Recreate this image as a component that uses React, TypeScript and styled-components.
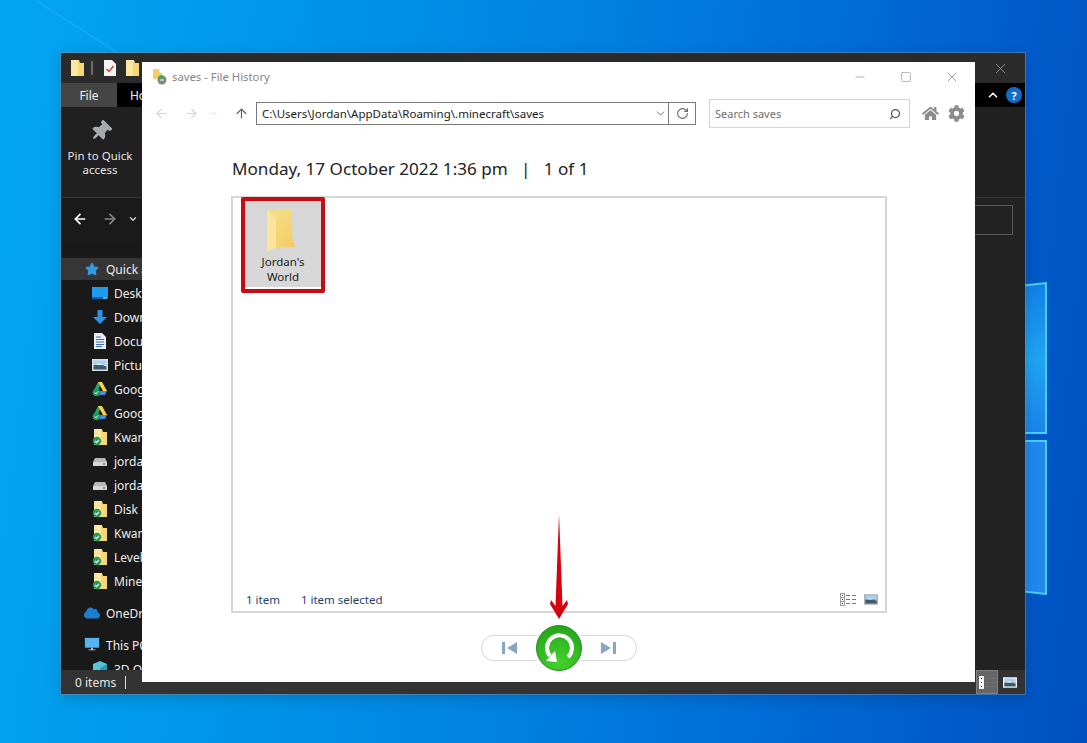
import React from 'react';
import styled, { createGlobalStyle } from 'styled-components';
import { ArrowLeft, ArrowRight, ArrowUp, ChevronDown, ChevronUp, Minus, RotateCw, Search, Square, X } from 'lucide-react';
import { FaCloud, FaCog, FaHome, FaStar, FaThumbtack } from 'react-icons/fa';

const GlobalStyle = createGlobalStyle`
	html, body {
		margin: 0;
		padding: 0;
		background: #0070da;
	}
	* {
		box-sizing: border-box;
	}
`;

// Desktop
const Desktop = styled.div`
	position: relative;
	width: 1087px;
	height: 743px;
	overflow: hidden;
	font-family: 'Noto Sans', 'Open Sans', sans-serif;
	background: linear-gradient(97deg, #02a6f2 0%, #0096ea 25%, #0082e2 50%, #006cd8 72%, #0050c0 100%);
`;

const Backdrop = styled.svg`
	position: absolute;
	inset: 0;
`;

// Explorer window (dark, behind)
const ExplorerWindow = styled.div`
	position: absolute;
	left: 61px;
	top: 53px;
	width: 964px;
	height: 641px;
	display: flex;
	flex-direction: column;
	background: #202020;
	box-shadow: 0 0 0 1px rgba(120, 140, 160, 0.55), 0 4px 14px rgba(0, 0, 0, 0.18);
	color: #f0f0f0;
	font-size: 12px;
`;

const ExplorerTitle = styled.div`
	height: 30px;
	flex: none;
	display: flex;
	align-items: center;
	padding: 0 16px 0 8px;
	gap: 6px;
	background: #2b2b2b;
`;

const TitleSeparator = styled.span`
	width: 2px;
	height: 14px;
	margin-right: 5px;
	background: #6a6a6a;
`;

const TitleIcon = styled.span`
	display: flex;
	margin-right: 2px;
`;

const ExplorerClose = styled.span`
	margin-left: auto;
	display: flex;
	color: #8f8f8f;
`;

const TabBar = styled.div`
	height: 24px;
	flex: none;
	display: flex;
	align-items: center;
	padding-right: 3px;
	background: #000;
`;

const Tab = styled.span<{ $active?: boolean }>`
	width: 56px;
	height: 100%;
	display: flex;
	align-items: center;
	justify-content: center;
	margin-right: ${(p) => (p.$active ? '2px' : '0')};
	background: ${(p) => (p.$active ? '#454545' : 'transparent')};
`;

const TabRight = styled.div`
	margin-left: auto;
	display: flex;
	align-items: center;
	gap: 6px;
`;

const HelpBadge = styled.span`
	width: 16px;
	height: 16px;
	border-radius: 50%;
	display: flex;
	align-items: center;
	justify-content: center;
	background: #0f6cc8;
	color: #fff;
	font-size: 11px;
	font-weight: 700;
`;

const Ribbon = styled.div`
	height: 91px;
	flex: none;
	padding-top: 14px;
	background: #202020;
	border-bottom: 1px solid #363636;
`;

const RibbonAction = styled.div`
	width: 78px;
	display: flex;
	flex-direction: column;
	align-items: center;
	text-align: center;
	line-height: 13.5px;
	font-size: 11.5px;
	color: #e4e4e4;
`;

const PinIcon = styled(FaThumbtack)`
	transform: rotate(45deg);
	color: #a4aab0;
	margin-bottom: 7px;
`;

const ExplorerNav = styled.div`
	height: 46px;
	flex: none;
	display: flex;
	align-items: center;
	padding: 0 12px 4px 11px;
	gap: 14px;
	background: linear-gradient(90deg, #1a1a1a 200px, #222 200px);
`;

const NavCaret = styled(ChevronDown)`
	margin-left: -4px;
	color: #ccc;
`;

const ExplorerSearch = styled.div`
	width: 200px;
	height: 30px;
	margin-left: auto;
	margin-top: 2px;
	border: 1px solid #5a5a5a;
`;

const ExplorerBody = styled.div`
	flex: 1;
	min-height: 0;
	display: flex;
	overflow: hidden;
	background: #222;
`;

const Sidebar = styled.div`
	width: 200px;
	flex: none;
	padding-top: 13px;
	background: #191919;
`;

const SideRow = styled.div<{ $level: number; $active?: boolean; $gap?: boolean }>`
	height: 24px;
	display: flex;
	align-items: center;
	gap: 6px;
	white-space: nowrap;
	margin-top: ${(p) => (p.$gap ? '8px' : '0')};
	padding-left: ${(p) => (p.$level === 2 ? '31px' : '23px')};
	font-size: 12px;
	color: #ececec;
	background: ${(p) => (p.$active ? 'linear-gradient(#363636, #363636) 0 1px / 100% 22px no-repeat' : 'none')};
`;

const SideIcon = styled.span`
	width: 16px;
	height: 16px;
	flex: none;
	display: flex;
	align-items: center;
	justify-content: center;
`;

const ExplorerStatus = styled.div`
	height: 24px;
	flex: none;
	display: flex;
	align-items: center;
	padding-left: 14px;
	background: #333;
	color: #e6e6e6;
	font-size: 12px;
`;

const StatusBar = styled.span`
	width: 1px;
	height: 13px;
	margin-left: 9px;
	background: #ddd;
`;

const ViewButtons = styled.div`
	margin-left: auto;
	height: 100%;
	display: flex;
	align-items: center;
`;

const ViewButton = styled.span<{ $active?: boolean }>`
	width: 22px;
	height: 100%;
	margin-right: ${(p) => (p.$active ? '1px' : '4px')};
	display: flex;
	align-items: center;
	justify-content: center;
	background: ${(p) => (p.$active ? '#666' : 'transparent')};
	box-shadow: ${(p) => (p.$active ? 'inset 0 0 0 1px #808080' : 'none')};
`;

// File History window (white, on top)
const HistoryWindow = styled.div`
	position: absolute;
	left: 142px;
	top: 62px;
	width: 833px;
	height: 620px;
	display: flex;
	flex-direction: column;
	background: #fff;
`;

const HistoryTitle = styled.div`
	height: 29px;
	flex: none;
	display: flex;
	align-items: center;
	padding-left: 10px;
	gap: 5px;
	font-size: 11.3px;
	color: #858585;
`;

const WindowControls = styled.div`
	margin-left: auto;
	display: flex;
	align-items: center;
	height: 100%;
	color: #777;
`;

const WindowControl = styled.span`
	width: 46px;
	display: flex;
	justify-content: center;
`;

const HistoryNav = styled.div`
	height: 29px;
	margin-top: 8px;
	flex: none;
	display: flex;
	align-items: center;
	padding-left: 8px;
`;

const NavSlot = styled.span<{ $w: number; $color: string; $ml?: number }>`
	width: ${(p) => p.$w}px;
	margin-left: ${(p) => p.$ml ?? 0}px;
	display: flex;
	justify-content: center;
	color: ${(p) => p.$color};
`;

const AddressBox = styled.div`
	width: 440px;
	height: 23px;
	margin-left: 7px;
	display: flex;
	align-items: center;
	border: 1px solid #7a7a7a;
	font-size: 11.5px;
	color: #1a1a1a;
`;

const AddressText = styled.span`
	flex: 1;
	padding-left: 5px;
	white-space: nowrap;
`;

const AddressChevron = styled.span`
	width: 16px;
	display: flex;
	justify-content: center;
	color: #555;
`;

const RefreshCell = styled.span`
	width: 27px;
	height: 100%;
	display: flex;
	align-items: center;
	justify-content: center;
	border-left: 1px solid #7a7a7a;
	color: #666;
`;

const SearchBox = styled.div`
	width: 201px;
	height: 29px;
	margin-left: 13px;
	display: flex;
	align-items: center;
	justify-content: space-between;
	padding: 0 8px 0 5px;
	border: 1px solid #d4d4d4;
	font-size: 11px;
	color: #6e6e6e;
`;

const FlippedSearch = styled(Search)`
	transform: scaleX(-1);
	color: #555;
`;

const NavTools = styled.div`
	display: flex;
	align-items: center;
	gap: 9px;
	margin-left: 12px;
	color: #8c8c8c;
`;

const DateHeading = styled.h1`
	margin: 28px 0 0 90px;
	height: 26px;
	line-height: 26px;
	font-size: 17.1px;
	font-weight: 400;
	color: #222;
	white-space: pre;
`;

const Panel = styled.div`
	width: 656px;
	height: 417px;
	margin: 14px 0 0 89px;
	display: flex;
	flex-direction: column;
	border: 2px solid #d6d6d6;
`;

const PanelContent = styled.div`
	flex: 1;
	padding-left: 8px;
`;

const SelectedItem = styled.div`
	width: 84px;
	height: 96px;
	margin-top: -1px;
	display: flex;
	flex-direction: column;
	align-items: center;
	padding-top: 9px;
	border: 4px solid #c80b12;
	border-radius: 2px;
	background: linear-gradient(#d7d7d7, #d7d7d7) 0 0 / 100% 86px no-repeat, #fff;
`;

const BigFolder = styled.svg`
	flex: none;
	margin-right: 4px;
`;

const ItemLabel = styled.span`
	margin-top: 2px;
	width: 70px;
	text-align: center;
	font-size: 11.5px;
	line-height: 15px;
	color: #1a1a1a;
`;

const PanelStatus = styled.div`
	height: 24px;
	flex: none;
	display: flex;
	align-items: center;
	padding: 0 7px 0 13px;
	font-size: 11.5px;
	color: #23406e;
`;

const StatusText = styled.span`
	margin-right: 21px;
`;

const PanelViews = styled.div`
	margin-left: auto;
	display: flex;
	align-items: center;
	gap: 7px;
`;

const Controls = styled.div`
	margin-top: 12px;
	display: flex;
	align-items: center;
	justify-content: center;
	padding-left: 1px;
`;

const Pill = styled.div<{ $side: 'left' | 'right' }>`
	width: 56px;
	height: 26px;
	display: flex;
	align-items: center;
	justify-content: center;
	border: 1px solid #d6dbe2;
	background: #fff;
	border-radius: ${(p) => (p.$side === 'left' ? '13px 0 0 13px' : '0 13px 13px 0')};
	border-${(p) => (p.$side === 'left' ? 'right' : 'left')}: none;
	margin-${(p) => (p.$side === 'left' ? 'right' : 'left')}: -1px;
`;

const RestoreButton = styled.div`
	width: 46px;
	height: 46px;
	flex: none;
	position: relative;
	z-index: 1;
	border-radius: 50%;
	border: 1px solid #1c8a1c;
	box-shadow: 0 0 0 2px #fff;
	background: radial-gradient(circle at 50% 85%, #46d02e 0%, #30b820 55%, #229a1a 100%);
	display: flex;
`;

const RedArrow = styled.svg`
	position: absolute;
	left: 548px;
	top: 514px;
`;

// small drawings
const FolderGlyph = ({ check }: { check?: boolean }) => (
	<svg width="16" height="18" viewBox="0 0 16 18">
		<path d="M2 1h8l1 3h4v13H2z" fill="#f7d774" />
		<path d="M2 1h7v16H2z" fill="#fbe7a0" />
		{check && (
			<>
				<circle cx="5" cy="13" r="4.2" fill="#1f9a58" />
				<path d="M3 13l1.5 1.6L7 11.8" stroke="#fff" strokeWidth="1.1" fill="none" />
			</>
		)}
	</svg>
);

const DriveGlyph = () => (
	<svg width="16" height="16" viewBox="0 0 16 16">
		<path d="M3 5h10l2 4H1z" fill="#b8b8b8" />
		<rect x="1" y="9" width="14" height="4" rx="0.5" fill="#d8d8d8" />
		<rect x="11" y="10.5" width="2" height="1" fill="#444" />
	</svg>
);

const GoogleGlyph = () => (
	<svg width="16" height="16" viewBox="0 0 16 16">
		<path d="M6 1h4l-4 8H2z" fill="#1fa463" />
		<path d="M6 1h4l5 9h-4z" fill="#ffd04b" />
		<path d="M6 10h9l-2 4H4z" fill="#4687f4" />
		<circle cx="4.5" cy="11.5" r="3.8" fill="#1f9a58" />
		<path d="M2.7 11.5l1.3 1.4 2.2-2.5" stroke="#fff" strokeWidth="1" fill="none" />
	</svg>
);

const DesktopGlyph = () => (
	<svg width="16" height="14" viewBox="0 0 16 14">
		<rect x="0" y="1" width="16" height="12" fill="#1b9cf0" />
		<rect x="0" y="11" width="16" height="2" fill="#0d5fa8" />
		<rect x="11" y="11.5" width="4" height="1" fill="#cfe8fa" />
	</svg>
);

const DownloadGlyph = () => (
	<svg width="16" height="16" viewBox="0 0 16 16">
		<path d="M5.5 1h5v7H15l-7 7-7-7h4.5z" fill="#2f8fe0" />
	</svg>
);

const DocumentGlyph = () => (
	<svg width="12" height="16" viewBox="0 0 12 16">
		<path d="M0 0h8l4 4v12H0z" fill="#e8eef4" />
		<path d="M2 4h5M2 6.5h8M2 9h8M2 11.5h8M2 13.5h6" stroke="#3a6ea8" strokeWidth="1" />
	</svg>
);

const PictureGlyph = ({ w = 16, h = 12, frame = '#d8dde2' }: { w?: number; h?: number; frame?: string }) => (
	<svg width={w} height={h} viewBox="0 0 16 12">
		<rect width="16" height="12" fill={frame} />
		<rect x="1.5" y="1.5" width="13" height="4.5" fill="#a8d0f2" />
		<rect x="1.5" y="6" width="13" height="4.5" fill="#3e5a68" />
		<path d="M1.5 6.5L7 4.5l7.5 3V6H1.5z" fill="#e8f2fa" />
	</svg>
);

const MonitorGlyph = () => (
	<svg width="18" height="16" viewBox="0 0 18 16">
		<rect x="1" y="0" width="16" height="11" fill="#58b4f0" />
		<path d="M8 11h2v2h3v1H5v-1h3z" fill="#c8d4de" />
	</svg>
);

const CubeGlyph = () => (
	<svg width="16" height="16" viewBox="0 0 16 16">
		<path d="M8 0l7 3v9l-7 4-7-4V3z" fill="#58c4d8" />
		<path d="M8 7l7-4v9l-7 4z" fill="#2f98b8" />
	</svg>
);

const ListViewGlyph = ({ box, line }: { box: string; line: string }) => (
	<svg width="17" height="13" viewBox="0 0 17 13">
		<rect x="0.5" y="0.5" width="4" height="12" fill="#fff" stroke={box} />
		<path d="M0 4.5h5M0 8.5h5" stroke={box} />
		<rect x="2" y="2" width="1" height="1" fill="#333" />
		<rect x="2" y="6" width="1" height="1" fill="#333" />
		<rect x="2" y="10" width="1" height="1" fill="#333" />
		<path d="M6 2.5h4M12 2.5h4M6 6.5h4M12 6.5h4M6 10.5h4M12 10.5h4" stroke={line} />
	</svg>
);

const ChecklistGlyph = () => (
	<svg width="12" height="16" viewBox="0 0 12 16">
		<path d="M0 0h8l4 4v12H0z" fill="#f4f4f4" />
		<path d="M2.5 9l2.5 2.5L9.5 6" stroke="#d8402a" strokeWidth="1.5" fill="none" />
	</svg>
);

const HistoryGlyph = () => (
	<svg width="15" height="16" viewBox="0 0 15 16">
		<path d="M1 0h6l1 4h2v6H1z" fill="#f2cf6a" />
		<circle cx="10" cy="11" r="4.5" fill="#7a8a80" />
		<path d="M8 11h4" stroke="#fff" />
		<path d="M6.5 8.5a4 4 0 0 1 5-1" stroke="#35b040" strokeWidth="1.5" fill="none" />
	</svg>
);

const SkipGlyph = ({ flip }: { flip?: boolean }) => (
	<svg width="15" height="12" viewBox="0 0 15 12" style={flip ? { transform: 'scaleX(-1)' } : undefined}>
		<rect x="0" y="0" width="3" height="12" fill="#8aa4c4" />
		<path d="M15 0v12L5 6z" fill="#8aa4c4" />
	</svg>
);

const sideItems: { label: string; icon: React.ReactNode; level: number; active?: boolean; gap?: boolean }[] = [
	{ label: 'Quick access', icon: <FaStar size={14} color="#2f9be8" />, level: 1, active: true },
	{ label: 'Desktop', icon: <DesktopGlyph />, level: 2 },
	{ label: 'Downloads', icon: <DownloadGlyph />, level: 2 },
	{ label: 'Documents', icon: <DocumentGlyph />, level: 2 },
	{ label: 'Pictures', icon: <PictureGlyph />, level: 2 },
	{ label: 'Google Drive', icon: <GoogleGlyph />, level: 2 },
	{ label: 'Google Drive', icon: <GoogleGlyph />, level: 2 },
	{ label: 'Kwan', icon: <FolderGlyph check />, level: 2 },
	{ label: 'jordan', icon: <DriveGlyph />, level: 2 },
	{ label: 'jordan', icon: <DriveGlyph />, level: 2 },
	{ label: 'Disk Drill', icon: <FolderGlyph check />, level: 2 },
	{ label: 'Kwan', icon: <FolderGlyph check />, level: 2 },
	{ label: 'Level', icon: <FolderGlyph check />, level: 2 },
	{ label: 'Minecraft', icon: <FolderGlyph check />, level: 2 },
	{ label: 'OneDrive', icon: <FaCloud size={16} color="#1c7fd4" />, level: 1, gap: true },
	{ label: 'This PC', icon: <MonitorGlyph />, level: 1, gap: true },
	{ label: '3D Objects', icon: <CubeGlyph />, level: 2 },
];

const App = () => {
	return (
		<Desktop>
			<GlobalStyle />
			<Backdrop width="1087" height="743" viewBox="0 0 1087 743">
				<defs>
					<linearGradient id="pane" x1="0" y1="0" x2="0" y2="1">
						<stop offset="0" stopColor="#1280e8" />
						<stop offset="0.5" stopColor="#20a4f4" />
						<stop offset="1" stopColor="#1a84ea" />
					</linearGradient>
				</defs>
				<path d="M35 0L118 53" stroke="#5cc8f8" strokeWidth="2" opacity="0.2" />
				<polygon points="1000,288 1046,283 1046,433 1000,433" fill="url(#pane)" stroke="#48d0f0" strokeWidth="2" />
				<polygon points="1000,441 1046,441 1046,594 1000,589" fill="#2288ee" stroke="#48d0f0" strokeWidth="2" />
			</Backdrop>

			<ExplorerWindow>
				<ExplorerTitle>
					<FolderGlyph />
					<TitleSeparator />
					<TitleIcon>
						<ChecklistGlyph />
					</TitleIcon>
					<FolderGlyph />
					<ExplorerClose>
						<X size={17} strokeWidth={1.25} />
					</ExplorerClose>
				</ExplorerTitle>
				<TabBar>
					<Tab $active>File</Tab>
					<Tab>Home</Tab>
					<TabRight>
						<ChevronUp size={14} strokeWidth={3} />
						<HelpBadge>?</HelpBadge>
					</TabRight>
				</TabBar>
				<Ribbon>
					<RibbonAction>
						<PinIcon size={21} />
						<span>Pin to Quick access</span>
					</RibbonAction>
				</Ribbon>
				<ExplorerNav>
					<ArrowLeft size={16} strokeWidth={2.5} color="#fff" />
					<ArrowRight size={16} strokeWidth={2.5} color="#888" />
					<NavCaret size={10} strokeWidth={3.5} />
					<ExplorerSearch />
				</ExplorerNav>
				<ExplorerBody>
					<Sidebar>
						{sideItems.map((item, i) => (
							<SideRow key={i} $level={item.level} $active={item.active} $gap={item.gap}>
								<SideIcon>{item.icon}</SideIcon>
								{item.label}
							</SideRow>
						))}
					</Sidebar>
				</ExplorerBody>
				<ExplorerStatus>
					0 items
					<StatusBar />
					<ViewButtons>
						<ViewButton $active>
							<ListViewGlyph box="#f4f4f4" line="#747474" />
						</ViewButton>
						<ViewButton>
							<PictureGlyph w={14} h={11} frame="#f0f4f8" />
						</ViewButton>
					</ViewButtons>
				</ExplorerStatus>
			</ExplorerWindow>

			<HistoryWindow>
				<HistoryTitle>
					<HistoryGlyph />
					saves - File History
					<WindowControls>
						<WindowControl>
							<Minus size={14} strokeWidth={1} />
						</WindowControl>
						<WindowControl>
							<Square size={12} strokeWidth={1} />
						</WindowControl>
						<WindowControl>
							<X size={16} strokeWidth={1} />
						</WindowControl>
					</WindowControls>
				</HistoryTitle>
				<HistoryNav>
					<NavSlot $w={22} $color="#d4d4d4">
						<ArrowLeft size={15} strokeWidth={1.75} />
					</NavSlot>
					<NavSlot $w={38} $color="#d4d4d4">
						<ArrowRight size={15} strokeWidth={1.75} />
					</NavSlot>
					<NavSlot $w={8} $color="#d4d4d4">
						<ChevronDown size={9} strokeWidth={2.5} />
					</NavSlot>
					<NavSlot $w={16} $ml={15} $color="#666">
						<ArrowUp size={15} strokeWidth={2} />
					</NavSlot>
					<AddressBox>
						<AddressText>C:\Users\Jordan\AppData\Roaming\.minecraft\saves</AddressText>
						<AddressChevron>
							<ChevronDown size={13} strokeWidth={1.5} />
						</AddressChevron>
						<RefreshCell>
							<RotateCw size={13} strokeWidth={2} />
						</RefreshCell>
					</AddressBox>
					<SearchBox>
						Search saves
						<FlippedSearch size={12} strokeWidth={2.5} />
					</SearchBox>
					<NavTools>
						<FaHome size={17} />
						<FaCog size={17} />
					</NavTools>
				</HistoryNav>
				<DateHeading>{'Monday, 17 October 2022 1:36 pm   |   1 of 1'}</DateHeading>
				<Panel>
					<PanelContent>
						<SelectedItem>
							<BigFolder width="28" height="42" viewBox="0 0 28 42">
								<defs>
									<linearGradient id="folderBack" x1="0" y1="0" x2="1" y2="1">
										<stop offset="0" stopColor="#f8e08e" />
										<stop offset="1" stopColor="#f1cc62" />
									</linearGradient>
								</defs>
								<path d="M0 0H25V27L28 37H9V8z" fill="url(#folderBack)" />
								<path d="M0 0L9 8V37L0 42z" fill="#fbe59c" />
							</BigFolder>
							<ItemLabel>Jordan's World</ItemLabel>
						</SelectedItem>
					</PanelContent>
					<PanelStatus>
						<StatusText>1 item</StatusText>
						<StatusText>1 item selected</StatusText>
						<PanelViews>
							<ListViewGlyph box="#9a9a9a" line="#777" />
							<PictureGlyph w={14} h={11} frame="#a4b0bc" />
						</PanelViews>
					</PanelStatus>
				</Panel>
				<Controls>
					<Pill $side="left">
						<SkipGlyph />
					</Pill>
					<RestoreButton>
						<svg width="44" height="44" viewBox="0 0 44 44">
							<path d="M31 31a12.5 12.5 0 1 0-18 -1" stroke="#fff" strokeWidth="4" fill="none" />
							<path d="M9 35l11 1-2-11z" fill="#fff" />
						</svg>
					</RestoreButton>
					<Pill $side="right">
						<SkipGlyph flip />
					</Pill>
				</Controls>
			</HistoryWindow>

			<RedArrow width="22" height="106" viewBox="0 0 22 106">
				<path d="M11 0L14.5 92 19 86 20 90 11 105 2 90 3 86 7.5 92z" fill="#d6000e" />
			</RedArrow>
		</Desktop>
	);
};

export default App;
